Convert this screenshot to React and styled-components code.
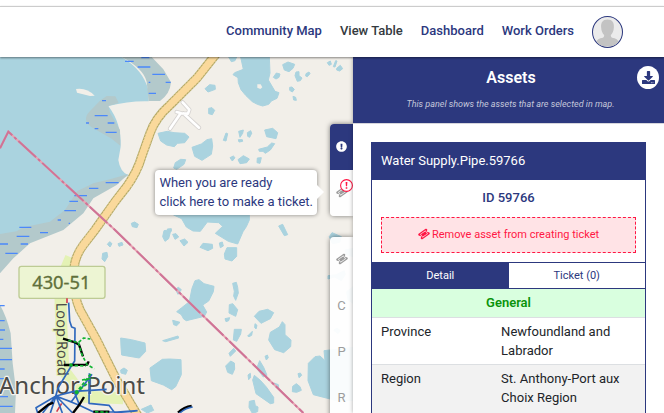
import React from "react";
import styled, { createGlobalStyle, css } from "styled-components";
import { FaDownload, FaExclamationCircle } from "react-icons/fa";

const navy = "#2c387e";
const red = "#ff1744";

const GlobalStyle = createGlobalStyle`
  *, *::before, *::after { box-sizing: border-box; }
  body {
    margin: 0;
    background: #fff;
    color: #212529;
    font: 13px/19px Roboto, "Liberation Sans", sans-serif;
  }
  button { font: inherit; cursor: pointer; }
`;

const Page = styled.div`
  display: flex;
  flex-direction: column;
  height: 100vh;
  padding-top: 6px;
  overflow: hidden;
`;

const Header = styled.header`
  position: relative;
  z-index: 3;
  flex: none;
  display: flex;
  align-items: center;
  justify-content: flex-end;
  gap: 18px;
  height: 51px;
  padding-right: 41px;
  border-top: 1px solid #ccc;
  background: #fff;
  box-shadow: 0 1px 2px rgba(0, 0, 0, 0.45);
`;

const Nav = styled.nav`
  display: flex;
  gap: 18px;
  padding-bottom: 3px;
`;

const NavLink = styled.a`
  color: ${(p) => (p.$active ? "#343a40" : navy)};
  font-weight: 500;
  text-decoration: none;
  white-space: nowrap;
`;

const AvatarButton = styled.button`
  width: 31px;
  height: 32px;
  padding: 0;
  border: 1px solid ${navy};
  border-radius: 50%;
  overflow: hidden;
  background: #ebebeb;
  svg { display: block; width: 100%; height: 100%; }
`;

const Main = styled.main`
  flex: 1;
  display: flex;
  min-height: 0;
`;

const MapArea = styled.section`
  position: relative;
  flex: 1;
  min-width: 0;
  overflow: hidden;
  background: #f2efe9;
`;

const MapDrawing = styled.svg`
  display: block;
  width: 100%;
  height: 100%;
`;

const Rail = styled.div`
  position: absolute;
  top: 67px;
  right: 0;
  display: flex;
  flex-direction: column;
  gap: 21px;
`;

const RailGroup = styled.div`
  display: flex;
  flex-direction: column;
  border-radius: 4px 0 0 4px;
  overflow: hidden;
  background: rgba(255, 255, 255, 0.93);
  box-shadow: 0 0 5px rgba(0, 0, 0, 0.5);
`;

const RailButton = styled.button`
  position: relative;
  display: grid;
  place-items: center;
  width: 23px;
  height: 46px;
  padding: 0 0 2px;
  border: 0;
  background: ${(p) => (p.$active ? navy : "transparent")};
  color: ${(p) => (p.$active ? "#fff" : "#9c9c9c")};
  svg { display: block; }
`;

const AlertBadge = styled.span`
  position: absolute;
  top: 9px;
  right: 0;
  width: 13px;
  height: 13px;
`;

const Tooltip = styled.div`
  position: absolute;
  top: 113px;
  right: 36px;
  padding: 3px 4px 4px;
  border-radius: 4px;
  background: #fff;
  color: ${navy};
  box-shadow: 0 0 4px rgba(0, 0, 0, 0.45);
  white-space: nowrap;
  &::after {
    content: "";
    position: absolute;
    top: 15px;
    left: 100%;
    border: 7px solid transparent;
    border-right-width: 0;
    border-left-color: #fff;
  }
`;

const Panel = styled.aside`
  position: relative;
  flex: 0 0 311px;
  display: flex;
  flex-direction: column;
  background: #fff;
  box-shadow: 0 0 4px rgba(0, 0, 0, 0.35);
`;

const PanelHeader = styled.header`
  position: relative;
  padding: 10px 5px 10px;
  border-bottom: 1px solid #d5d5dc;
  background: ${navy};
  color: #fff;
  text-align: center;
`;

const PanelTitle = styled.h1`
  margin: 0 0 8px;
  padding-left: 5px;
  font-size: 16px;
  font-weight: 600;
  line-height: 21px;
`;

const PanelNote = styled.p`
  margin: 0;
  padding-left: 4px;
  color: #c4c7da;
  font-size: 9px;
  font-style: italic;
  line-height: 17px;
`;

const DownloadButton = styled.button`
  position: absolute;
  top: 9px;
  right: 5px;
  display: grid;
  place-items: center;
  width: 22px;
  height: 23px;
  padding: 0;
  border: 0;
  border-radius: 50%;
  background: #fff;
  color: ${navy};
`;

const PanelBody = styled.div`
  flex: 1;
  min-height: 0;
  padding: 18px 18px 0;
  overflow: hidden;
`;

const Card = styled.article`
  border: 1px solid ${navy};
`;

const CardTitle = styled.h2`
  margin: 0;
  padding: 8px 9px 10px;
  background: ${navy};
  color: #fff;
  font-size: 13px;
  font-weight: 400;
`;

const CardSummary = styled.div`
  padding: 8px 9px 9px;
  text-align: center;
`;

const AssetId = styled.h3`
  margin: 0 0 10px;
  color: ${navy};
  font-size: 13px;
  font-weight: 500;
`;

const RemoveButton = styled.button`
  display: flex;
  align-items: center;
  justify-content: center;
  gap: 2px;
  width: 100%;
  height: 36px;
  padding: 0 6px 2px;
  border: 1px dashed ${red};
  background: #ffe3e6;
  color: ${red};
  && { font-size: 11px; }
`;

const TabBar = styled.div`
  display: flex;
  border-top: 1px solid ${navy};
  border-bottom: 1px solid ${navy};
`;

const Tab = styled.button`
  flex: 1;
  height: 25px;
  padding: 0;
  border: 0;
  background: #fff;
  color: ${navy};
  && { font-size: 11px; }
  ${(p) => p.$active && css`
    background: ${navy};
    color: #fff;
  `}
`;

const Table = styled.table`
  width: 100%;
  table-layout: fixed;
  border-collapse: collapse;
`;

const LabelColumn = styled.col`
  width: 44%;
`;

const GroupHead = styled.th`
  padding: 4px 9px 5px;
  background: #d9ffdf;
  color: #0a930a;
  font-weight: 600;
`;

const Row = styled.tr`
  border-top: 1px solid #dcdfe2;
  background: ${(p) => (p.$shaded ? "#f2f2f2" : "#fff")};
  &:last-child { height: 56px; }
`;

const Label = styled.th`
  padding: 4px 9px;
  font-weight: 400;
  text-align: left;
  vertical-align: top;
`;

const Value = styled.td`
  padding: 4px 9px;
  vertical-align: top;
`;

const navItems = ["Community Map", "View Table", "Dashboard", "Work Orders"];

const details = [
  ["Province", "Newfoundland and Labrador"],
  ["Region", "St. Anthony-Port aux Choix Region"],
];

// Short blue marsh strokes: x, y, length.
const marsh = [
  [375, 184, 26], [413, 201, 38], [424, 173, 24], [457, 223, 38], [497, 247, 15], [446, 247, 5],
  [446, 280, 22], [306, 302, 12], [284, 347, 39], [258, 369, 9], [323, 369, 20], [284, 386, 11],
  [317, 397, 33], [317, 548, 39], [267, 565, 28], [223, 587, 38], [208, 604, 26], [193, 632, 35],
  [173, 660, 10], [206, 670, 4], [58, 682, 36], [120, 698, 24], [50, 709, 38], [0, 732, 24],
  [62, 732, 22], [16, 760, 37], [0, 917, 14], [0, 962, 14], [0, 990, 15], [0, 1018, 10],
  [0, 1045, 36], [0, 1079, 36], [0, 1107, 14], [0, 1136, 26], [20, 1163, 20], [0, 1190, 24], [0, 1219, 38],
];

const lakes = [
  // north east
  "M722 171h86l2 48-5 21 20 34 12 4-6 17-17 8-8 10-18 5-16-5-15-8-20-19-14-17-8-21-1-15-15-9 5-6 26-10z",
  "M686 171h24l-5 11-11 3z", "M848 194l16-8 20 7-5 12-12 10-14-5z", "M820 232l9-13 11 3-3 10-9 5z",
  "M888 216l9-1 0 12 9 7-5 8-9 2-7-17z", "M918 221l9-5 3 5-8 9-5-2z", "M869 262l7-1 7 7-6 8-8-5z", "M879 289l8 3 2 9-8-1z",
  "M982 188l9-5 3 10-7 3z", "M1000 200l7-18 4 1-6 18z", "M1010 205l11-9 7 10-9 7-9-3z",
  "M615 266l14-12 16 2 1 12-22 8z", "M626 325l10-2 8 8-7 13-11-3z",
  "M474 400l28-6 20 4 32 2 13 11-13 17-22 2-9 10-23-5-18-12z",
  "M576 442l28-10 17-13 14-3 3 22-4 25-28 18-22-12z",
  "M526 488l16-10 15 1-5 14-22 15-9-4z", "M670 421l8-22 5 2-5 22z",
  "M716 394l14-4-2 10-8 12z", "M715 419l12 0 1 5-11 2z", "M742 398l10-6 3 8-6 12-6-3z",
  "M794 390l24-5 15 13-5 18-28-6z", "M776 448l26-7 13-12 9 2-13 19-15 10-7-6-11 0z",
  "M690 473l10-5 5 5-8 10z", "M714 479l16-12 18 10-8 11-20 3z", "M772 474l12-1-4 17-9-2z",
  "M521 645l21-5 206 0 0 20-9 20-10 15-16 37-28-8-39-24 22-21-12-11-34-2-21 28-22-1-20-12-14-25z",
  "M836 678l12-5 15 31-10 3z", "M394 670l10-4 11 7-4 10-14-3z", "M502 687l12-1 0 8-9 0z",
  // south east, lower reaches
  "M492 692l21-3-7 27-11 8-7-14z", "M518 703l10-2 8 10-11 7z", "M540 722l14-5 10 10-12 11z",
  "M600 742l9-12 28 3 1 12-14 7z", "M658 729l9-3 3 12-9 5z", "M673 762l8-19 29 0 0 26-14 14-21-6z",
  "M576 865l9-23 12-3 15 12 30 8-2 16-14 28-18 12 12 21-7 13-54 13-8-5-7-13-14-9 14-11 24-19z",
  "M526 868l9-6 9 7-10 14z", "M518 961l22 6-10 10-9-3z", "M488 1022l46-14 2 6-39 11z",
  "M698 850l11-3 4 15 2 17-8 22-6-13 2-14z", "M688 914l10-3 15 18-6 20-20-10z",
  "M675 956l14-3-3 9-8 3z", "M703 988l21 0-2 14-12 22-10-4z",
  "M763 949l14-15 26-6 18 10-10 18-28 14z", "M765 971l6 5-3 11-4-5z",
  "M743 1008l14-14-2 12-8 4z", "M806 1020l5-23 27-16 9-16 8 9 0 30 18 16-1 20-21 18-27-9z",
  "M687 1060l14-15 6 8-16 16z", "M677 1098l15-15 11 6 1 18-7 16-14-6z",
  "M795 1069l7-4 3 8-6 7z", "M744 1125l7-5 1 12-6 7z",
  "M770 1105l9-23 12 20 10 24-11 5z", "M822 1149l13 5 1 12-10-6z",
  "M758 1140l5-14 18 15 18 20 22 31 0 17-10 2-43-30z", "M748 1204l15-3 3 16 8 4-1 14-16 5-10-18z",
  "M450 1104l37-26 22-1 34 2 1 45-17 36-12 9-25-14-36-13z", "M878 1159l11-8 11 9 4 11-14 6-13-2z",
  "M894 1121l7-2 4 7-8 7z", "M925 1090l20-20 15-2 15 14-3-30 87-10 0 160-53-1-66-17-16-42z",
  "M988 710l8-12 28 12-5 17-22 4z", "M984 827l25-3 24-12 3 12-12 18-21-11-19 6z",
  "M1035 750l24-5v25l-20-6z", "M1040 875l19-15v50l-15-10z", "M1001 991l10-7 10 8-7 9z",
  // south west
  "M362 1014l32 5 41 10 2 25-19 20-53-9-2-25z", "M308 760l13-3 2 13-9 15-8-8z", "M322 733l7-8 7 6-6 10z",
  "M354 731l12-4 3 8-12 4z", "M362 1110l10-6 10 7-5 12-14-4z", "M424 1228l29-13 8 16-19 8z",
];

const roadPath =
  "M650 160L590 235 510 315Q466 354 450 400L425 470Q412 515 380 560L345 605 285 690 250 735Q220 775 222 820 218 880 240 930L290 1020 350 1140 415 1250";

function MapCanvas() {
  return (
    <MapDrawing viewBox="0 171 1059 1068" preserveAspectRatio="xMinYMin slice" role="img" aria-label="Map of Anchor Point">
      <path fill="#aad3df" d="M0 171H365Q430 210 445 270L446 304Q390 302 325 318 365 370 362 440L355 480Q360 515 385 526L280 590 195 680 60 710 0 715Z" />
      <g fill="#b3c9cb">
        <path d="M365 171Q430 205 440 245L446 303H480Q510 282 513 247L490 208 455 171Z" />
        <path d="M356 309L346 289 320 288 300 302 268 335Q245 360 275 382L335 416 361 437 360 390 330 338 325 318Z" />
        <path d="M385 522L330 538 280 550 232 573 195 630 150 665 70 682 50 694 0 702V820L40 775 90 730 190 690 250 640 280 595 350 555Z" />
        <path d="M0 915Q20 950 32 1000L38 1090 48 1170 45 1239H0Z" />
      </g>
      <path fill="#f2efe9" d="M228 267Q260 262 284 287L270 288 231 278Z" />
      <g fill="#aad3df" stroke="#aad3df" strokeWidth="3" strokeLinejoin="round">
        {lakes.map((d) => <path key={d} d={d} />)}
      </g>
      <path fill="#f2efe9" d="M772 253l10 0 5 9-6 5-9-4z" />
      <path stroke="#4b88fa" strokeWidth="4" fill="none" d={marsh.map(([x, y, w]) => `M${x} ${y}h${w}`).join("")} />

      <g fill="none" strokeLinecap="round" strokeLinejoin="round">
        <path stroke="#d5d2d0" strokeWidth="13" d="M548 307l20 22-4 12-20-1-14-4M542 340l-32 46M550 340l47 43" />
        <path stroke="#fff" strokeWidth="8" d="M548 307l20 22-4 12-20-1-14-4M542 340l-32 46M550 340l47 43" />
      </g>

      <g fill="none" strokeLinecap="butt">
        <path stroke="#e4f2b5" strokeWidth="36" d="M213 772L180 850 185 1000 190 1110 250 1190 370 1195" />
        <path stroke="#b5aa66" strokeWidth="28" d={roadPath} />
        <path stroke="#d9c993" strokeWidth="28" strokeDasharray="3 7" d={roadPath} />
        <path stroke="#fad99b" strokeWidth="21" d={roadPath} />
        <path stroke="#e8a3b3" strokeWidth="6" d="M0 445L25 395 345 690 540 880 910 1239" />
        <path stroke="#cf7496" strokeWidth="6" strokeDasharray="72 8 9 8" d="M0 445L25 395 345 690 540 880 910 1239" />
      </g>

      <rect x="57" y="799" width="258" height="96" rx="7" fill="#edf5d3" stroke="#bdcb94" strokeWidth="4" />
      <g fontFamily="'Noto Sans', 'DejaVu Sans', sans-serif" fill="#4b4b48" stroke="#f5f3ed" strokeWidth="7" strokeLinejoin="round" paintOrder="stroke">
        <text x="184" y="867" fontSize="55" fill="#60703b" stroke="#60703b" strokeWidth="1" textAnchor="middle">430-51</text>
        <text fontSize="44" stroke="#e4f2b5" transform="translate(169 908) rotate(89)">Loop Road</text>
        <text x="-3" y="1182" fontSize="72">Anchor Point</text>
      </g>

      <g fill="none" strokeWidth="5" strokeLinejoin="round">
        <path stroke="#d33b4c" d="M201 895v14M185 1210l-15 25" />
        <path stroke="#2f68bd" d="M206 908l3 55 6 18 10 4-1 98-12 18-38 63-7 25 47 16 24-32 38-50M168 1188l54-14 98-6M168 1188l-60 35 5 16M168 1188l-40 51M168 1188l-17 51M168 1188l19 51M168 1188l50 51M168 1188l70 28 43 20 70 0 62-4M268 1120l-1 90 60 6 17 22 68-5M222 1174l17 42" />
        <path stroke="#000" strokeWidth="7" d="M189 1016l36 11 12 7 12 35M192 1095l22 0 48-1 4-10M252 1191l-15 25-18 23M114 1239l31-25 15-6M280 1235l48 0" />
        <path stroke="#11b532" strokeDasharray="10 6" d="M205 1021l30 7 16-14 20 3M235 1028l11 36 15 30 22 12M208 1096l50 2M272 1122l-42 54M246 1140l34-6M240 1168l28-22M285 1235l38 2" />
        <circle cx="230" cy="1177" r="6" fill="#11b532" />
        <circle cx="213" cy="1095" r="5" fill="#11b532" />
        <path stroke="#000" strokeWidth="7" d="M534 1238q18-17 41-20" />
        <path stroke="#2f68bd" d="M537 1241q18-17 41-20" />
      </g>
    </MapDrawing>
  );
}

function TicketIcon() {
  return (
    <svg viewBox="0 0 1792 1792" width="12" height="12" fill="currentColor" aria-hidden="true">
      <path transform="rotate(10 896 896)" d="M1024 452l316 316-572 572-316-316zM813 1431l618-618q19-19 19-45t-19-45l-362-362q-18-18-45-18t-45 18l-618 618q-19 19-19 45t19 45l362 362q18 18 45 18t45-18zM1702 794l-907 908q-37 37-90.500 37t-90.500-37l-126-126q56-56 56-136t-56-136-136-56-136 56l-125-126q-37-37-37-90.500t37-90.500l907-906q37-37 90.500-37t90.500 37l125 125q-56 56-56 136t56 136 136 56 136-56l126 125q37 37 37 90.500t-37 90.500z" />
    </svg>
  );
}

function AlertIcon() {
  return (
    <svg viewBox="0 0 13 13" width="13" height="13" aria-hidden="true">
      <circle cx="6.5" cy="6.5" r="5.9" fill="#fff" stroke={red} strokeWidth="1.1" />
      <path fill={red} d="M5.6 3h1.8l-.3 4.3H5.9zM5.7 8.2h1.6v1.5H5.7z" />
    </svg>
  );
}

export default function App() {
  return (
    <>
      <GlobalStyle />
      <Page>
        <Header>
          <Nav aria-label="Main">
            {navItems.map((item) => (
              <NavLink key={item} href="#" $active={item === "View Table"}>{item}</NavLink>
            ))}
          </Nav>
          <AvatarButton aria-label="Account">
            <svg viewBox="0 0 30 30" aria-hidden="true">
              <path fill="#c3c3c3" d="M15 2c-5 0-7 3.400-6.600 8 .2 4 1.500 6.500 3.100 8 .3 1.700-.5 2.700-2.500 3.300C5.500 22.300 3 23 2.500 30h25c-.5-7-3-7.700-6.500-8.700-2-.6-2.800-1.600-2.500-3.300 1.600-1.500 2.900-4 3.100-8C22 5.400 20 2 15 2z" />
            </svg>
          </AvatarButton>
        </Header>
        <Main>
          <MapArea>
            <MapCanvas />
            <Tooltip role="tooltip">When you are ready<br />click here to make a ticket.</Tooltip>
            <Rail>
              <RailGroup>
                <RailButton $active aria-label="Assets"><FaExclamationCircle size={11} /></RailButton>
                <RailButton aria-label="Make a ticket">
                  <TicketIcon />
                  <AlertBadge><AlertIcon /></AlertBadge>
                </RailButton>
              </RailGroup>
              <RailGroup>
                <RailButton aria-label="Tickets"><TicketIcon /></RailButton>
                <RailButton>C</RailButton>
                <RailButton>P</RailButton>
                <RailButton>R</RailButton>
              </RailGroup>
            </Rail>
          </MapArea>
          <Panel>
            <PanelHeader>
              <PanelTitle>Assets</PanelTitle>
              <PanelNote>This panel shows the assets that are selected in map.</PanelNote>
              <DownloadButton aria-label="Download"><FaDownload size={13} /></DownloadButton>
            </PanelHeader>
            <PanelBody>
              <Card>
                <CardTitle>Water Supply.Pipe.59766</CardTitle>
                <CardSummary>
                  <AssetId>ID 59766</AssetId>
                  <RemoveButton><TicketIcon />Remove asset from creating ticket</RemoveButton>
                </CardSummary>
                <TabBar role="tablist">
                  <Tab role="tab" aria-selected="true" $active>Detail</Tab>
                  <Tab role="tab" aria-selected="false">Ticket (0)</Tab>
                </TabBar>
                <Table>
                  <colgroup>
                    <LabelColumn />
                    <col />
                  </colgroup>
                  <thead>
                    <tr><GroupHead colSpan={2}>General</GroupHead></tr>
                  </thead>
                  <tbody>
                    {details.map(([label, value], i) => (
                      <Row key={label} $shaded={i % 2 === 1}>
                        <Label scope="row">{label}</Label>
                        <Value>{value}</Value>
                      </Row>
                    ))}
                  </tbody>
                </Table>
              </Card>
            </PanelBody>
          </Panel>
        </Main>
      </Page>
    </>
  );
}
